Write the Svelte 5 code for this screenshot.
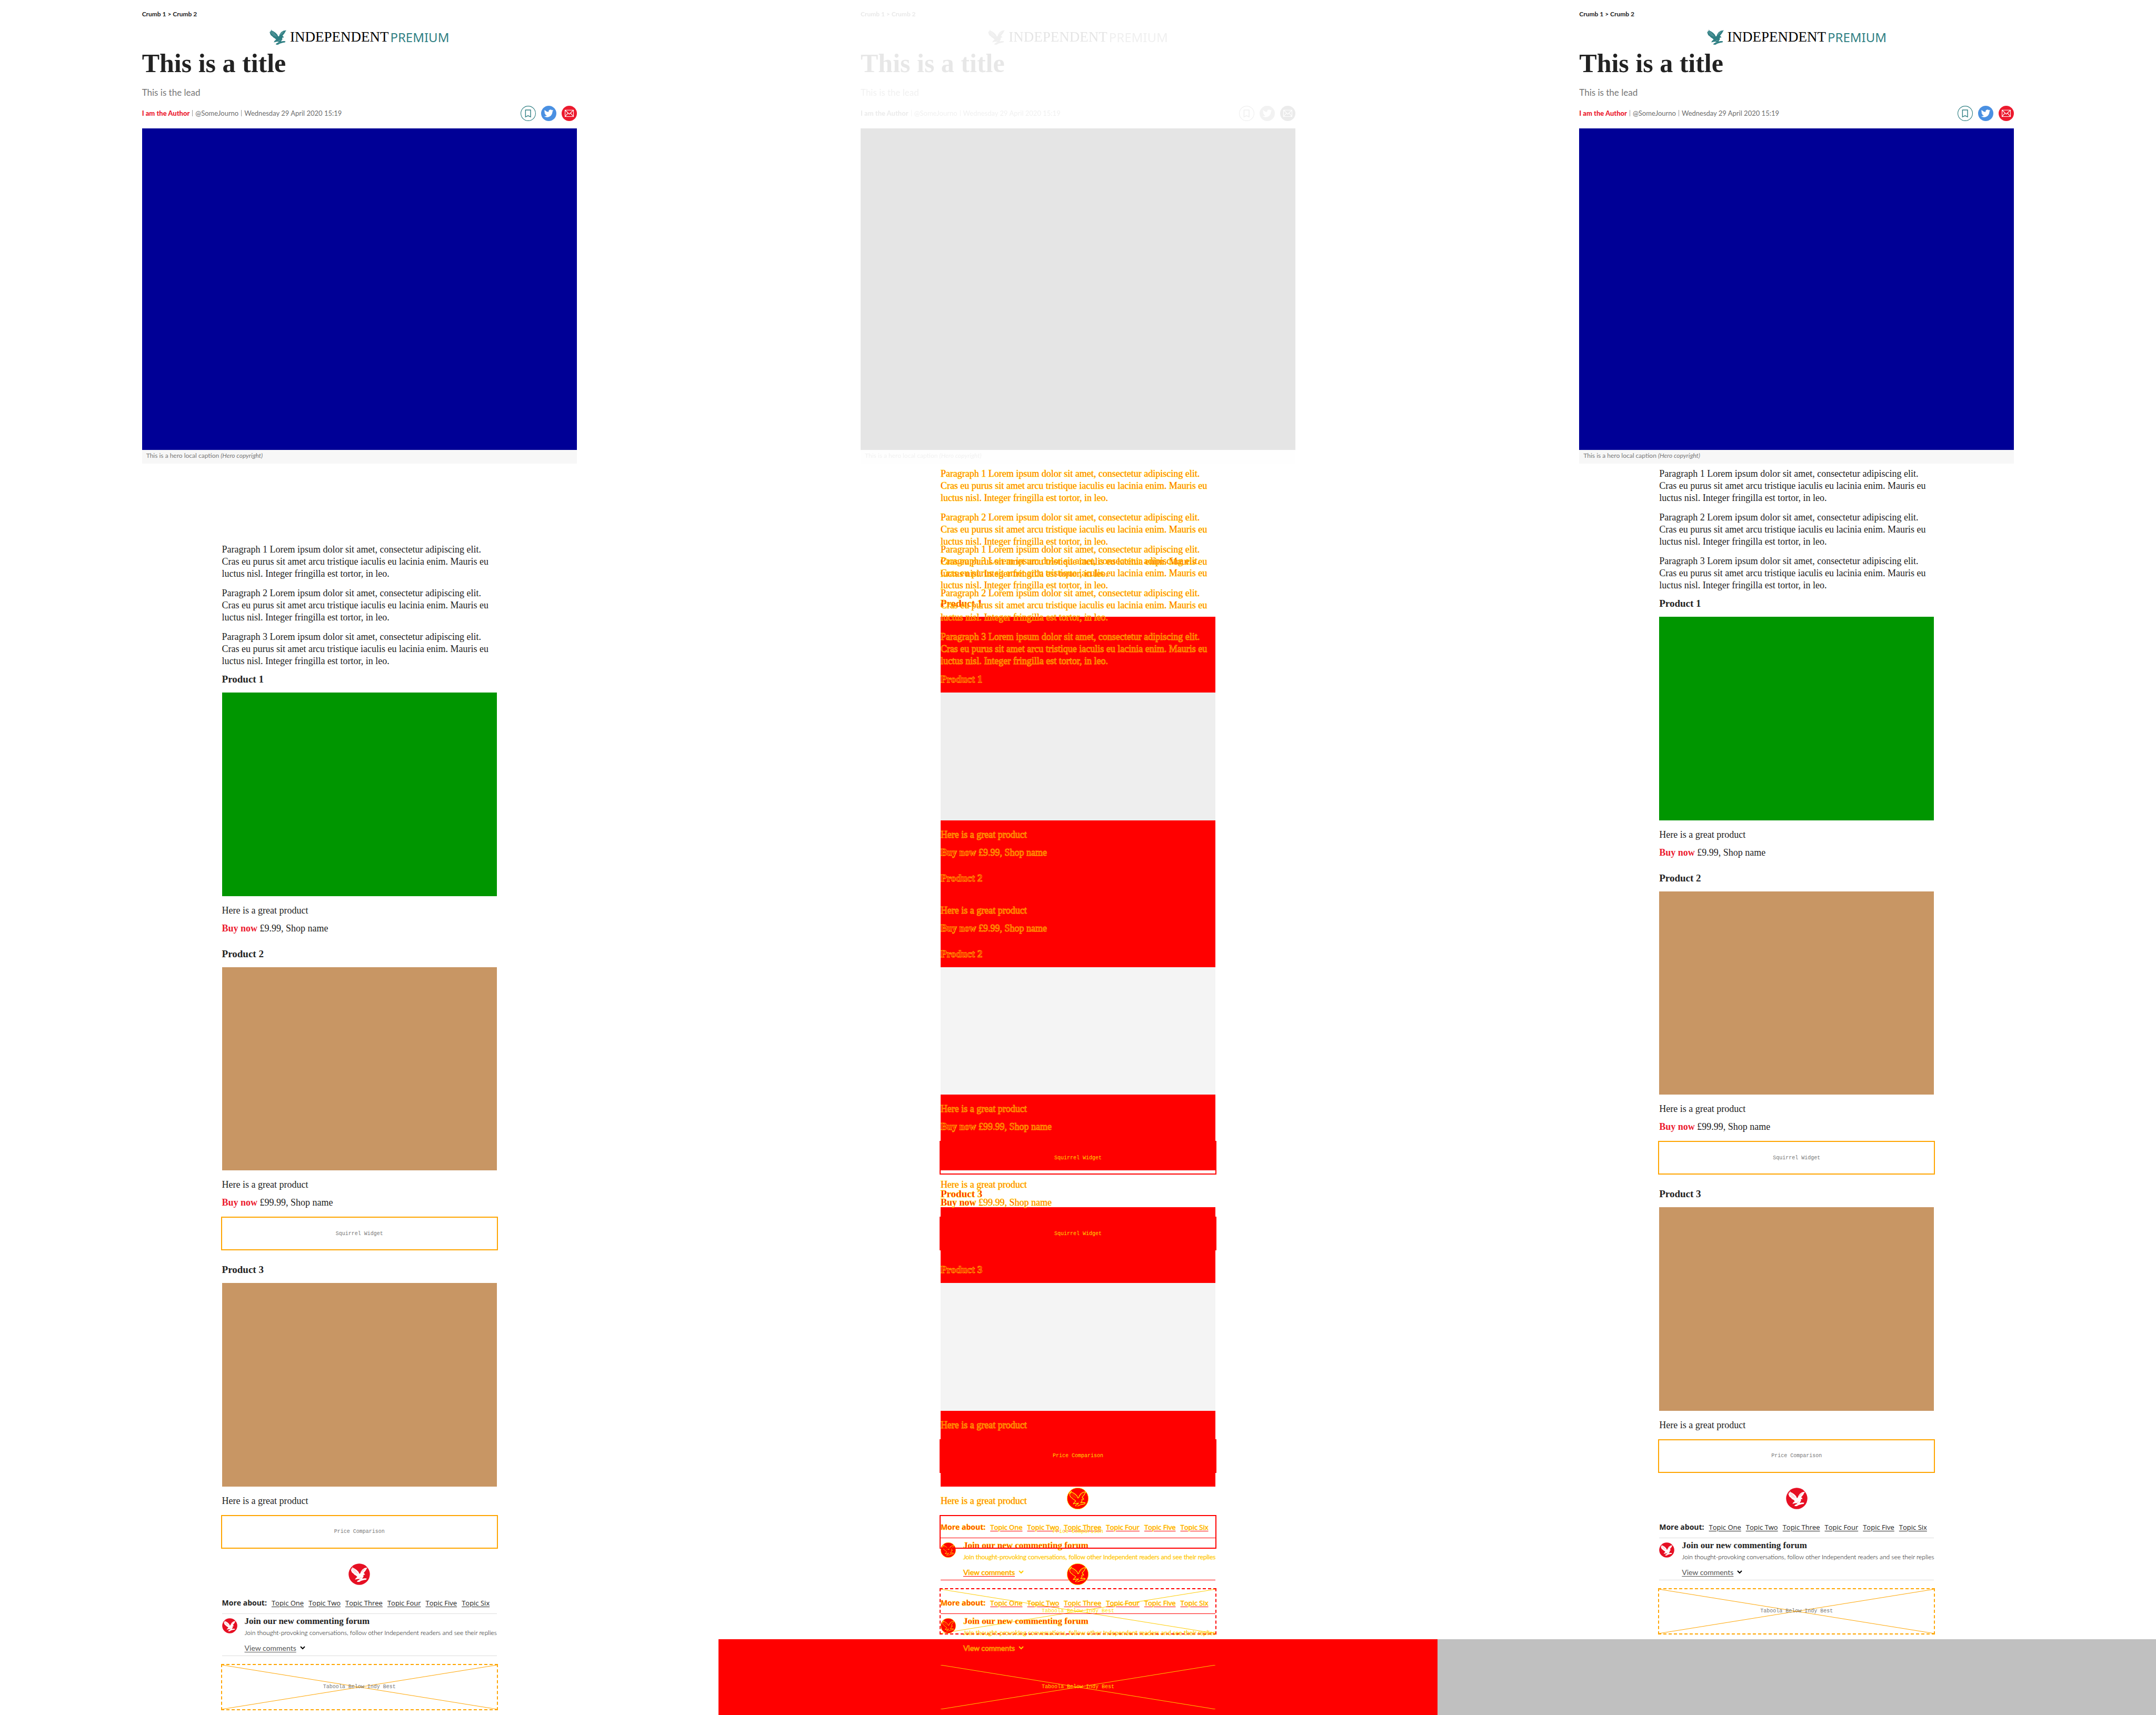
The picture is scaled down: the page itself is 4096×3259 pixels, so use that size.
<script>
  const paragraphs = [1, 2, 3];
  const products = [
    { id: 1, tone: 'green', price: '£9.99' },
    { id: 2, tone: 'tan', price: '£99.99', widget: 'Squirrel Widget' },
    { id: 3, tone: 'tan', widget: 'Price Comparison' }
  ];
  const topics = ['One', 'Two', 'Three', 'Four', 'Five', 'Six'];
</script>

{#snippet eagle()}
  <g class="eagle">
    <path
      d="M12 0 L17 9 L26 12 L40 22 L52 34 L58 47 L64 44 L68 32 L78 18 L92 9 L112 5 L106 14 L101 24 L93 34 L86 42 L92 46 L96 56 L90 53 L84 58 L86 66 L80 74 L77 80 L92 77 L106 78 L104 86 L88 89 L70 94 L56 102 L42 101 L44 94 L56 88 L61 82 L48 82 L28 86 L34 76 L44 68 L36 60 L26 54 L18 46 L8 38 L4 28 L0 16 L6 18 L5 8 L11 12 Z"
    />
    <path
      class="barbs"
      d="M8 18 L30 44 M14 14 L40 46 M22 16 L48 48 M96 14 L76 34 M88 14 L70 36 M66 84 L60 92 M72 72 L58 76"
    />
  </g>
{/snippet}

{#snippet roundel(small)}
  <svg class="roundel" class:small viewBox="0 0 144 144" role="img" aria-label="Independent">
    <circle class="disc" cx="72" cy="72" r="71" />
    <svg x="15" y="22" width="112" height="102" viewBox="0 0 112 102">{@render eagle()}</svg>
  </svg>
{/snippet}

{#snippet masthead()}
  <header class="masthead">
    <nav class="crumbs" aria-label="Breadcrumb">Crumb 1 &gt; Crumb 2</nav>
    <div class="logo">
      <svg class="logo-bird" viewBox="0 0 112 102" aria-hidden="true">{@render eagle()}</svg>
      <span class="logo-name">INDEPENDENT</span>
      <span class="logo-tier">PREMIUM</span>
    </div>
    <h1>This is a title</h1>
    <p class="lead">This is the lead</p>
    <div class="meta">
      <div class="byline">
        <a class="author" href="#author">I am the Author</a>
        <span class="bar"></span>
        <a href="#handle">@SomeJourno</a>
        <span class="bar"></span>
        <time datetime="2020-04-29T15:19">Wednesday 29 April 2020 15:19</time>
      </div>
      <div class="share">
        <button type="button" aria-label="Bookmark">
          <svg viewBox="0 0 102 102">
            <circle cx="51" cy="51" r="49" fill="#fff" stroke="#2f7f83" stroke-width="4" />
            <path d="M33 28 H67 V74 L50 66 L33 74 Z" fill="none" stroke="#2f7f83" stroke-width="5" />
          </svg>
        </button>
        <button type="button" aria-label="Share on Twitter">
          <svg viewBox="0 0 102 102">
            <circle cx="51" cy="51" r="51" fill="#4a90e2" />
            <svg x="20" y="20" width="62" height="62" viewBox="0 0 24 24">
              <path
                fill="#fff"
                d="M23.95 4.57a10 10 0 0 1-2.82.77 4.96 4.96 0 0 0 2.16-2.72c-.95.55-2 .96-3.13 1.18a4.92 4.92 0 0 0-8.38 4.48C7.69 8.1 4.07 6.13 1.64 3.16a4.92 4.92 0 0 0 1.52 6.57 4.9 4.9 0 0 1-2.23-.61v.06a4.92 4.92 0 0 0 3.95 4.83 5 5 0 0 1-2.21.08 4.94 4.94 0 0 0 4.6 3.42A9.87 9.87 0 0 1 0 19.54a13.99 13.99 0 0 0 7.55 2.21c9.05 0 14-7.5 14-13.98 0-.21 0-.42-.02-.63a9.94 9.94 0 0 0 2.46-2.55z"
              />
            </svg>
          </svg>
        </button>
        <button type="button" aria-label="Share by email">
          <svg viewBox="0 0 102 102">
            <circle cx="51" cy="51" r="51" fill="#ec1a2e" />
            <path
              d="M23 29 H79 V72 H23 Z M23 29 L51 56 L79 29 M23 72 L43 49 M79 72 L59 49"
              fill="none"
              stroke="#fff"
              stroke-width="4"
            />
          </svg>
        </button>
      </div>
    </div>
    <figure class="hero">
      <div class="hero-image"></div>
      <figcaption>This is a hero local caption <em>(Hero copyright)</em></figcaption>
    </figure>
  </header>
{/snippet}

{#snippet story()}
  <article class="story">
    {#each paragraphs as n}
      <p class="para">
        Paragraph {n} Lorem ipsum dolor sit amet, consectetur adipiscing elit.<br />
        Cras eu purus sit amet arcu tristique iaculis eu lacinia enim. Mauris eu<br />
        luctus nisl. Integer fringilla est tortor, in leo.
      </p>
    {/each}
    {#each products as product}
      <section class="product">
        <h2>Product {product.id}</h2>
        <div class="shot {product.tone}"></div>
        <p class="blurb">Here is a great product</p>
        {#if product.price}
          <p class="offer"><a href="#buy">Buy now</a> {product.price}, Shop name</p>
        {/if}
        {#if product.widget}
          <div class="widget">{product.widget}</div>
        {/if}
      </section>
    {/each}
    <div class="end-mark">{@render roundel(false)}</div>
    <nav class="topics" aria-label="More about">
      <strong>More about:</strong>
      {#each topics as topic}
        <a href="#topic">Topic {topic}</a>
      {/each}
    </nav>
    <section class="forum">
      {@render roundel(true)}
      <div class="forum-text">
        <h3>Join our new commenting forum</h3>
        <p>Join thought-provoking conversations, follow other Independent readers and see their replies</p>
        <button type="button" class="view">
          <span>View comments</span>
          <svg viewBox="0 0 10 7" aria-hidden="true"><path d="M1 1 L5 5 L9 1" /></svg>
        </button>
      </div>
    </section>
    <div class="slot">
      <svg viewBox="0 0 100 100" preserveAspectRatio="none" aria-hidden="true">
        <path d="M0 0 L100 100 M0 100 L100 0" vector-effect="non-scaling-stroke" />
      </svg>
      <span>Taboola Below Indy Best</span>
    </div>
  </article>
{/snippet}

<main class="board">
  <section class="panel">
    {@render masthead()}
    <div class="shift">{@render story()}</div>
  </section>

  <section class="panel diff">
    {@render masthead()}
    <div class="stack">
      <div class="layer">
        {@render story()}
        <div class="absent"></div>
      </div>
      <div class="layer shift later">{@render story()}</div>
    </div>
  </section>

  <section class="panel">
    {@render masthead()}
    {@render story()}
    <div class="absent"></div>
  </section>
</main>

<style>
  :global(body) {
    background: #fff;
  }

  .board {
    --serif: 'Liberation Serif', serif;
    --sans: Lato, sans-serif;
    --wide-sans: 'Open Sans', sans-serif;
    --mono: 'Liberation Mono', monospace;
    --shift: 144px;
    --brand: #ec1a2e;
    display: grid;
    grid-template-columns: repeat(3, minmax(0, 1fr));
    min-height: 100vh;
    color: #222;
    font-family: var(--serif);
  }

  h1,
  h2,
  h3,
  p,
  figure {
    margin: 0;
  }

  a {
    color: inherit;
    text-decoration: none;
  }

  button {
    padding: 0;
    border: 0;
    background: none;
    font: inherit;
    color: inherit;
    cursor: pointer;
  }

  .panel,
  .layer {
    display: flex;
    flex-direction: column;
    min-width: 0;
  }

  .absent {
    flex: 1;
    background: #c0c0c0;
  }

  .shift {
    padding-top: var(--shift);
  }

  /* Masthead */
  .masthead {
    width: 60.5%;
    margin: 0 auto;
    padding-top: 19px;
    font-family: var(--sans);
  }

  .crumbs {
    font-size: 12px;
    line-height: 16px;
    font-weight: 700;
  }

  .logo {
    display: flex;
    justify-content: center;
    align-items: center;
    height: 29px;
    margin-top: 21px;
    line-height: 29px;
  }

  .logo-bird {
    width: 32px;
    height: 29px;
    margin-right: 7px;
    color: #2f7f83;
    --gap: #fff;
  }

  .logo-name {
    font-family: var(--serif);
    font-size: 27px;
    color: #000;
  }

  .logo-tier {
    margin-left: 3px;
    font-family: 'Noto Sans', sans-serif;
    font-size: 24px;
    color: #2f7f83;
  }

  .eagle {
    fill: currentColor;
  }

  .barbs {
    fill: none;
    stroke: var(--gap);
    stroke-width: 2;
    opacity: 0.5;
  }

  h1 {
    margin-top: 7px;
    font-family: var(--serif);
    font-size: 50px;
    line-height: 56px;
    font-weight: 700;
  }

  .lead {
    margin-top: 16px;
    font-size: 17px;
    line-height: 24px;
    color: #777;
  }

  .meta {
    display: flex;
    justify-content: space-between;
    align-items: center;
    margin-top: 13px;
    color: #6e6e6e;
  }

  .byline {
    display: flex;
    align-items: center;
    gap: 5px;
    font-size: 13px;
    line-height: 18px;
    padding-bottom: 2px;
  }

  .author {
    color: var(--brand);
    font-weight: 900;
  }

  .bar {
    width: 1px;
    height: 12px;
    background: #999;
  }

  .share {
    display: flex;
    gap: 10px;
  }

  .share button > svg {
    display: block;
    width: 29px;
    height: 29px;
  }

  .hero {
    margin-top: 14px;
    background: #f7f7f7;
  }

  .hero-image {
    aspect-ratio: 968 / 716;
    background: #000096;
  }

  figcaption {
    padding: 0 8px 4px;
    font-size: 12px;
    line-height: 22px;
    color: #777;
  }

  /* Story */
  .story {
    width: 38.25%;
    margin: 0 auto;
    padding: 8px 0 9px;
    font-size: 18px;
    line-height: 23px;
    white-space: nowrap;
  }

  .para + .para {
    margin-top: 14px;
  }

  .product {
    padding-top: 25px;
  }

  .para + .product {
    padding-top: 11px;
  }

  h2 {
    font-size: 19px;
    line-height: 24px;
    font-weight: 700;
  }

  .shot {
    margin: 13px 0 16px;
    aspect-ratio: 612 / 453;
  }

  .green {
    background: #009600;
  }

  .tan {
    background: #c89664;
  }

  .offer {
    margin-top: 11px;
  }

  .offer a {
    color: var(--brand);
    font-weight: 700;
  }

  .widget,
  .slot {
    box-sizing: border-box;
    display: flex;
    align-items: center;
    justify-content: center;
    margin: 15px -2px 0;
    border: 2px solid orange;
    font-family: var(--mono);
    font-size: 10px;
    color: #777;
  }

  .widget {
    height: 64px;
  }

  .end-mark {
    display: flex;
    justify-content: center;
    margin-top: 28px;
  }

  .roundel {
    display: block;
    flex: none;
    width: 41px;
    height: 41px;
    color: #fff;
    --gap: #e60f23;
  }

  .disc {
    fill: #e60f23;
  }

  .roundel.small {
    width: 29px;
    height: 29px;
    margin-top: 4px;
  }

  .topics {
    display: flex;
    align-items: baseline;
    gap: 9px;
    margin-top: 24px;
    padding-bottom: 10px;
    border-bottom: 1px solid #ddd;
    font-family: var(--wide-sans);
    font-size: 13px;
    line-height: 20px;
  }

  .topics strong {
    font-size: 14px;
    font-weight: 700;
  }

  .topics a,
  .view span {
    text-decoration: underline;
    text-underline-offset: 2px;
  }

  .forum {
    display: flex;
    gap: 14px;
    padding: 4px 0;
    border-bottom: 1px solid #ddd;
    font-family: var(--sans);
  }

  h3 {
    font-family: var(--serif);
    font-size: 17px;
    line-height: 20px;
    font-weight: 700;
  }

  .forum p {
    margin-top: 3px;
    font-size: 12px;
    font-weight: 300;
    line-height: 18px;
    color: #000;
  }

  .view {
    display: flex;
    align-items: center;
    gap: 7px;
    margin-top: 10px;
    font-size: 14px;
    line-height: 20px;
    color: #555;
  }

  .view svg {
    width: 10px;
    height: 7px;
    fill: none;
    stroke: #000;
    stroke-width: 2;
  }

  .slot {
    position: relative;
    height: 88px;
    border-style: dashed;
  }

  .slot svg {
    position: absolute;
    inset: 0;
    width: 100%;
    height: 100%;
    fill: none;
    stroke: orange;
    stroke-width: 1;
  }

  .slot span {
    position: relative;
  }

  /* Difference panel: unchanged parts fade out, changed parts turn red and yellow */
  .diff .masthead {
    filter: grayscale(1);
    opacity: 0.1;
  }

  .stack {
    display: grid;
    flex: 1;
  }

  .stack .layer {
    grid-area: 1 / 1;
  }

  .stack .absent {
    background: #f00;
  }

  .stack .story,
  .stack .story :is(a, strong, h3, p, span, .view) {
    color: #f00;
    text-decoration-color: #f00;
  }

  .stack .story :is(p, h2, h3, strong, a, .view) {
    -webkit-text-stroke: 1px rgba(255, 240, 0, 0.65);
  }

  .stack .story :is(.widget, .slot span) {
    color: #fd0;
  }

  .stack :is(p, h2, h3, .widget, .end-mark, .topics, .roundel, .view, .slot) {
    position: relative;
    z-index: 1;
  }

  .stack .shot {
    background: #f00;
  }

  .stack .later .shot {
    background: linear-gradient(#f4f4f4, #f4f4f4) no-repeat 0 0 / 100% calc(100% - var(--shift)) #f00;
  }

  .stack .later .shot.green {
    background-image: linear-gradient(#eee, #eee);
  }

  .stack :is(.widget, .slot, .topics, .forum) {
    border-color: #f00;
  }

  .stack .disc {
    fill: #f00;
    stroke: #ff0;
    stroke-width: 3;
  }

  .stack .eagle {
    fill: #f00;
    stroke: #ff0;
    stroke-width: 4;
  }

  .stack .barbs {
    stroke: #ff0;
  }

  .stack .slot svg {
    stroke: #fc0;
  }

  .stack .view svg {
    stroke: #fc0;
  }
</style>
